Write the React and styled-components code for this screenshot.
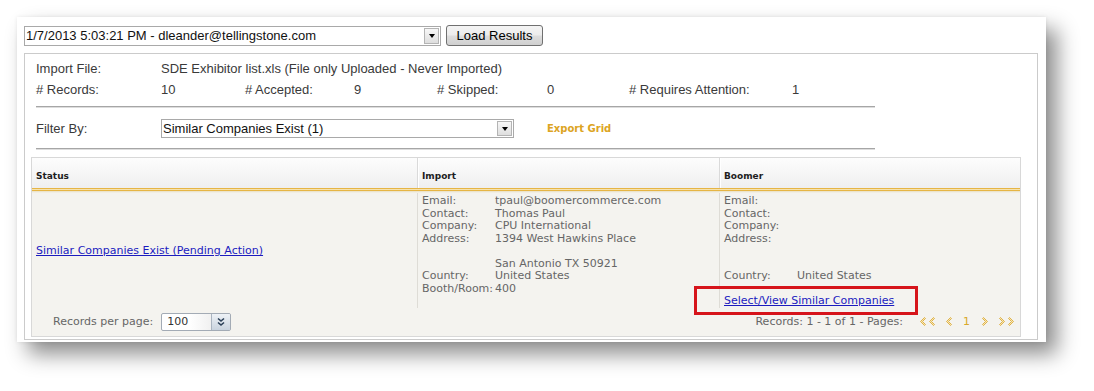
import React from "react";
import styled, { createGlobalStyle } from "styled-components";

const GlobalStyle = createGlobalStyle`
  html, body { margin: 0; padding: 0; background: #ffffff; }
  body { font-family: "Liberation Sans", Arial, sans-serif; }
`;

const Page = styled.div`
  padding: 17px 0 0 17px;
  width: 1094px;
  height: 391px;
  box-sizing: border-box;
  overflow: hidden;
`;

const Panel = styled.div`
  width: 1029px;
  height: 325px;
  box-sizing: border-box;
  background: #fff;
  padding: 8px 0 0 7px;
  box-shadow: 0 0 4px rgba(0, 0, 0, 0.08), 11px 12px 20px rgba(0, 0, 0, 0.45);
`;

const Toolbar = styled.div`
  display: flex;
  align-items: center;
  gap: 5px;
  height: 21px;
`;

const Select = styled.div`
  width: ${(p) => p.$w}px;
  height: ${(p) => p.$h}px;
  box-sizing: border-box;
  border: 1px solid #a9a9a9;
  background: #fff;
  display: flex;
  align-items: center;
  font: 13px "Liberation Sans", Arial, sans-serif;
  color: #111;
  padding-left: 1px;
`;

const SelectText = styled.span`
  flex: 1;
  white-space: nowrap;
  overflow: hidden;
`;

const ArrowBox = styled.span`
  width: 15px;
  height: calc(100% - 2px);
  margin-right: 1px;
  box-sizing: border-box;
  border: 1px solid #b4b4b4;
  background: linear-gradient(#f7f7f7, #dedede);
  display: flex;
  align-items: center;
  justify-content: center;
  &::after {
    content: "";
    border-left: 3.5px solid transparent;
    border-right: 3.5px solid transparent;
    border-top: 4px solid #000;
    margin-top: 1px;
  }
`;

const Button = styled.button`
  width: 97px;
  height: 21px;
  box-sizing: border-box;
  border: 1px solid #707070;
  border-radius: 3px;
  background: linear-gradient(#f4f4f4 0%, #ececec 48%, #dddddd 52%, #d0d0d0 100%);
  font: 13px "Liberation Sans", Arial, sans-serif;
  color: #000;
  padding: 0;
`;

const InnerBox = styled.div`
  margin-top: 7px;
  width: 1014px;
  box-sizing: border-box;
  border: 1px solid #cbcbcb;
  padding: 4px 0 2px 0;
`;

const InfoGrid = styled.div`
  display: grid;
  grid-template-columns: 125px 84px 109px 83px 110px 82px 163px 1fr;
  padding-left: 11px;
  font: 13px "Liberation Sans", Arial, sans-serif;
  color: #3a3a3a;
  line-height: 21px;
  white-space: nowrap;
`;

const Wide = styled.span`
  grid-column: 2 / -1;
`;

const Rule = styled.div`
  margin: ${(p) => p.$mt}px 0 0 11px;
  width: 839px;
  border-top: 1px solid #a6a6a6;
  border-bottom: 1px solid #dddddd;
`;

const FilterRow = styled.div`
  height: 40px;
  display: flex;
  align-items: center;
  padding-left: 11px;
  font: 13px "Liberation Sans", Arial, sans-serif;
  color: #3a3a3a;
`;

const FilterLabel = styled.span`
  width: 125px;
`;

const ExportLink = styled.span`
  margin-left: 33px;
  font: bold 10px "DejaVu Sans", Verdana, sans-serif;
  color: #dca422;
`;

const Grid = styled.div`
  margin: 7px 16px 0 6px;
  border: 1px solid #d8d8d8;
  width: 990px;
  box-sizing: border-box;
  font: 11px "DejaVu Sans", Verdana, sans-serif;
`;

const Row = styled.div`
  display: grid;
  grid-template-columns: 385px 302px 1fr;
`;

const HeadRow = styled(Row)`
  height: 30px;
  background: linear-gradient(#fdfdfd, #efefef);
`;

const HeadCell = styled.div`
  padding: 5px 0 0 4px;
  display: flex;
  align-items: center;
  font: bold 9px "DejaVu Sans", Verdana, sans-serif;
  color: #1e1e1e;
  border-left: ${(p) => (p.$first ? "none" : "1px solid #dadada")};
  box-shadow: ${(p) => (p.$first ? "none" : "inset 1px 0 #ffffff")};
`;

const GoldRule = styled.div`
  height: 5px;
  background: linear-gradient(
    to bottom,
    #e6b545 0 1px,
    #f6e2ad 1px 2px,
    #e6b545 2px 3px,
    #ece4cc 3px 4px,
    #f1eee4 4px 5px
  );
`;

const BodyRow = styled(Row)`
  position: relative;
  background: #f4f3ef;
`;

const Cell = styled.div`
  padding: 2px 4px 0 4px;
  border-left: ${(p) => (p.$first ? "none" : "1px solid #dedcd6")};
  display: ${(p) => (p.$center ? "flex" : "block")};
  align-items: center;
  color: #666;
  line-height: 12.5px;
  min-height: 112px;
`;

const Details = styled.div`
  display: grid;
  grid-template-columns: 73px 1fr;
  line-height: 12.5px;
  height: 12.5px;
  white-space: nowrap;
`;

const Link = styled.a`
  color: #1b1bbf;
  text-decoration: underline;
  cursor: pointer;
  line-height: 12.5px;
`;

const Annotation = styled.div`
  position: absolute;
  left: 662px;
  top: 93px;
  width: 224px;
  height: 29px;
  box-sizing: border-box;
  border: 3px solid #d6141b;
  z-index: 2;
  pointer-events: none;
`;

const Footer = styled.div`
  height: 28px;
  display: flex;
  align-items: center;
  justify-content: space-between;
  padding: 0 5px 0 21px;
  background: #f4f3ef;
  color: #666;
`;

const FooterLeft = styled.div`
  display: flex;
  align-items: center;
  gap: 8px;
`;

const MiniSelect = styled.div`
  width: 70px;
  height: 18px;
  box-sizing: border-box;
  border: 1px solid #a3abb5;
  border-radius: 2px;
  background: linear-gradient(to right, #ffffff 40%, #e4e4e4);
  display: flex;
  align-items: center;
  color: #333;
  overflow: hidden;
`;

const MiniText = styled.span`
  flex: 1;
  padding-left: 5px;
`;

const MiniBtn = styled.span`
  width: 18px;
  height: 100%;
  border-left: 1px solid #aab4c0;
  background: linear-gradient(#eef2f6, #c9d3de);
  display: flex;
  align-items: center;
  justify-content: center;
`;

const FooterRight = styled.div`
  display: flex;
  align-items: center;
`;

const Pager = styled.div`
  display: flex;
  align-items: center;
  margin-left: 16px;
  color: #d8a82a;
`;

const PagerItem = styled.span`
  display: flex;
  align-items: center;
  gap: 2px;
  margin-left: ${(p) => p.$ml}px;
`;

const Chev = ({ right }) => (
  <svg width="7" height="9" viewBox="0 0 7 9">
    <polygon
      points={right ? "1.5,0.5 5.5,4.5 1.5,8.5 0.5,7.5 3.5,4.5 0.5,1.5" : "5.5,0.5 1.5,4.5 5.5,8.5 6.5,7.5 3.5,4.5 6.5,1.5"}
      fill="#f7e6b4"
      stroke="#d9a52a"
      strokeWidth="0.8"
      strokeLinejoin="round"
    />
  </svg>
);

const DoubleDown = () => (
  <svg width="10" height="10" viewBox="0 0 10 10">
    <path d="M2 1.5 L5 4 L8 1.5 M2 5.5 L5 8 L8 5.5" fill="none" stroke="#2c4058" strokeWidth="1.6" />
  </svg>
);

const importRows = [
  ["Email:", "tpaul@boomercommerce.com"],
  ["Contact:", "Thomas Paul"],
  ["Company:", "CPU International"],
  ["Address:", "1394 West Hawkins Place"],
  ["", ""],
  ["", "San Antonio TX 50921"],
  ["Country:", "United States"],
  ["Booth/Room:", "400"],
];

const boomerRows = [
  ["Email:", ""],
  ["Contact:", ""],
  ["Company:", ""],
  ["Address:", ""],
  ["", ""],
  ["", ""],
  ["Country:", "United States"],
  ["", ""],
];

export default function App() {
  return (
    <>
      <GlobalStyle />
      <Page>
        <Panel>
          <Toolbar>
            <Select $w={417} $h={20}>
              <SelectText>1/7/2013 5:03:21 PM - dleander@tellingstone.com</SelectText>
              <ArrowBox />
            </Select>
            <Button>Load Results</Button>
          </Toolbar>
          <InnerBox>
            <InfoGrid>
              <span>Import File:</span>
              <Wide>SDE Exhibitor list.xls (File only Uploaded - Never Imported)</Wide>
              <span># Records:</span>
              <span>10</span>
              <span># Accepted:</span>
              <span>9</span>
              <span># Skipped:</span>
              <span>0</span>
              <span># Requires Attention:</span>
              <span>1</span>
            </InfoGrid>
            <Rule $mt={6} />
            <FilterRow>
              <FilterLabel>Filter By:</FilterLabel>
              <Select $w={353} $h={19}>
                <SelectText>Similar Companies Exist (1)</SelectText>
                <ArrowBox />
              </Select>
              <ExportLink>Export Grid</ExportLink>
            </FilterRow>
            <Rule $mt={0} />
            <Grid>
              <HeadRow>
                <HeadCell $first>Status</HeadCell>
                <HeadCell>Import</HeadCell>
                <HeadCell>Boomer</HeadCell>
              </HeadRow>
              <GoldRule />
              <BodyRow>
                <Cell $first $center>
                  <Link>Similar Companies Exist (Pending Action)</Link>
                </Cell>
                <Cell>
                  {importRows.map(([k, v], i) => (
                    <Details key={i}>
                      <span>{k}</span>
                      <span>{v}</span>
                    </Details>
                  ))}
                </Cell>
                <Cell>
                  {boomerRows.map(([k, v], i) => (
                    <Details key={i}>
                      <span>{k}</span>
                      <span>{v}</span>
                    </Details>
                  ))}
                  <div>
                    <Link>Select/View Similar Companies</Link>
                  </div>
                </Cell>
                <Annotation />
              </BodyRow>
              <Footer>
                <FooterLeft>
                  <span>Records per page:</span>
                  <MiniSelect>
                    <MiniText>100</MiniText>
                    <MiniBtn>
                      <DoubleDown />
                    </MiniBtn>
                  </MiniSelect>
                </FooterLeft>
                <FooterRight>
                  <span>Records: 1 - 1 of 1 - Pages:</span>
                  <Pager>
                    <PagerItem $ml={0}>
                      <Chev />
                      <Chev />
                    </PagerItem>
                    <PagerItem $ml={10}>
                      <Chev />
                    </PagerItem>
                    <PagerItem $ml={11}>1</PagerItem>
                    <PagerItem $ml={12}>
                      <Chev right />
                    </PagerItem>
                    <PagerItem $ml={10}>
                      <Chev right />
                      <Chev right />
                    </PagerItem>
                  </Pager>
                </FooterRight>
              </Footer>
            </Grid>
          </InnerBox>
        </Panel>
      </Page>
    </>
  );
}
